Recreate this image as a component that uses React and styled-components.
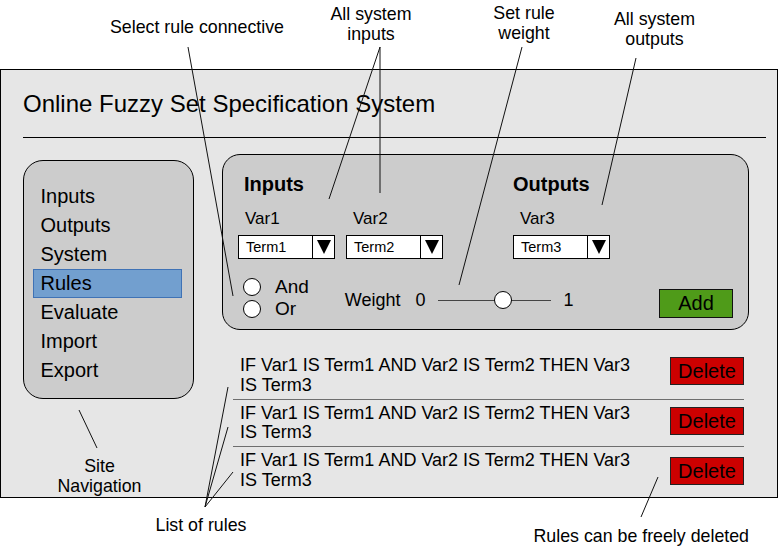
import React from "react";
import styled, { createGlobalStyle } from "styled-components";

const GlobalStyle = createGlobalStyle`
  html, body {
    margin: 0;
    background: #fff;
  }
  body {
    font-family: "Liberation Sans", Arial, sans-serif;
    color: #000;
  }
`;

const NAV_ITEMS = ["Inputs", "Outputs", "System", "Rules", "Evaluate", "Import", "Export"];
const RULES = [
  "IF Var1 IS Term1 AND Var2 IS Term2 THEN Var3 IS Term3",
  "IF Var1 IS Term1 AND Var2 IS Term2 THEN Var3 IS Term3",
  "IF Var1 IS Term1 AND Var2 IS Term2 THEN Var3 IS Term3",
];

// callout labels drawn over the mockup
const CALLOUTS = [
  { text: "Select rule connective", x: 110, y: 16.5 },
  { text: "All system\ninputs", x: 371, y: 4, center: true },
  { text: "Set rule\nweight", x: 524, y: 2.5, center: true },
  { text: "All system\noutputs", x: 654.5, y: 9, center: true },
  { text: "Site\nNavigation", x: 99.5, y: 456, center: true },
  { text: "List of rules", x: 155.5, y: 515 },
  { text: "Rules can be freely deleted", x: 533.5, y: 526 },
];

const LEADERS = [
  [188, 47, 233, 296],
  [380, 47, 380, 193],
  [380, 47, 329, 199],
  [522, 47, 459, 285],
  [636, 58, 602, 205],
  [79, 410, 97, 448],
  [205, 507, 228, 387],
  [205, 507, 228, 427],
  [205, 507, 233, 472],
  [641, 517, 658, 477],
];

function Select({ value }) {
  return (
    <SelectBox>
      <SelectValue>{value}</SelectValue>
      <SelectArrow>
        <Triangle />
      </SelectArrow>
    </SelectBox>
  );
}

function App() {
  return (
    <Page>
      <GlobalStyle />
      <Window>
        <Header>
          <Title>Online Fuzzy Set Specification System</Title>
        </Header>
        <Body>
          <Nav>
            {NAV_ITEMS.map((item) => (
              <NavItem key={item} $active={item === "Rules"}>
                {item}
              </NavItem>
            ))}
          </Nav>
          <Main>
            <Panel>
              <PanelTop>
                <Group>
                  <GroupTitle $indent={6}>Inputs</GroupTitle>
                  <Fields>
                    <Field>
                      <FieldLabel>Var1</FieldLabel>
                      <Select value="Term1" />
                    </Field>
                    <Field>
                      <FieldLabel>Var2</FieldLabel>
                      <Select value="Term2" />
                    </Field>
                  </Fields>
                </Group>
                <Group $offset={70}>
                  <GroupTitle>Outputs</GroupTitle>
                  <Fields>
                    <Field>
                      <FieldLabel>Var3</FieldLabel>
                      <Select value="Term3" />
                    </Field>
                  </Fields>
                </Group>
              </PanelTop>
              <PanelBottom>
                <Radios>
                  <RadioOption>
                    <RadioCircle />
                    And
                  </RadioOption>
                  <RadioOption>
                    <RadioCircle />
                    Or
                  </RadioOption>
                </Radios>
                <Weight>
                  <span>Weight</span>
                  <span>0</span>
                  <Track>
                    <Thumb $value={0.575} />
                  </Track>
                  <span>1</span>
                </Weight>
                <AddButton>Add</AddButton>
              </PanelBottom>
            </Panel>
            <RuleList>
              {RULES.map((rule, i) => (
                <RuleRow key={i}>
                  <RuleText>{rule}</RuleText>
                  <DeleteButton $shift={i * 2.5}>Delete</DeleteButton>
                </RuleRow>
              ))}
            </RuleList>
          </Main>
        </Body>
      </Window>
      <Leaders width="778" height="549" viewBox="0 0 778 549">
        {LEADERS.map(([x1, y1, x2, y2], i) => (
          <line key={i} x1={x1} y1={y1} x2={x2} y2={y2} stroke="#111" strokeWidth="1" />
        ))}
      </Leaders>
      {CALLOUTS.map((c) => (
        <Callout key={c.text} $x={c.x} $y={c.y} $center={c.center}>
          {c.text}
        </Callout>
      ))}
    </Page>
  );
}

const Page = styled.div`
  position: relative;
  width: 778px;
  height: 549px;
  padding-top: 69px;
  box-sizing: border-box;
  overflow: hidden;
`;

const Window = styled.div`
  width: 778px;
  height: 429px;
  box-sizing: border-box;
  border: 1px solid #000;
  background: #e6e6e6;
  padding: 0 11px 0 22px;
`;

const Header = styled.div`
  padding: 20px 0 19px;
  border-bottom: 1px solid #000;
`;

const Title = styled.h1`
  margin: 0;
  font-size: 24px;
  line-height: 28px;
  font-weight: normal;
`;

const Body = styled.div`
  display: flex;
  align-items: flex-start;
  gap: 28px;
`;

const Nav = styled.nav`
  margin-top: 22px;
  width: 171px;
  height: 239px;
  box-sizing: border-box;
  border: 1px solid #000;
  border-radius: 20px;
  background: #cccccc;
  padding: 20.5px 11px 0 9px;
`;

const NavItem = styled.div`
  height: 29px;
  box-sizing: border-box;
  border: 1px solid ${(p) => (p.$active ? "#3f72b5" : "transparent")};
  background: ${(p) => (p.$active ? "#729fcf" : "transparent")};
  padding-left: 6.5px;
  font-size: 20px;
  line-height: 27px;
`;

const Main = styled.div`
  margin-top: 16px;
  width: 527px;
`;

const Panel = styled.div`
  border: 1px solid #000;
  border-radius: 18px;
  background: #cccccc;
  padding: 18px 15px 9px;
`;

const PanelTop = styled.div`
  display: flex;
`;

const Group = styled.div`
  margin-left: ${(p) => p.$offset || 0}px;
`;

const GroupTitle = styled.div`
  font-size: 20px;
  font-weight: bold;
  line-height: 23px;
  padding-left: ${(p) => p.$indent || 0}px;
  margin-bottom: 13px;
`;

const Fields = styled.div`
  display: flex;
  gap: 11px;
`;

const Field = styled.div`
  display: flex;
  flex-direction: column;
  gap: 6px;
`;

const FieldLabel = styled.div`
  font-size: 17px;
  line-height: 20px;
  padding-left: 7px;
`;

const SelectBox = styled.div`
  display: flex;
  width: 97px;
  height: 24px;
  box-sizing: border-box;
  border: 1px solid #000;
  background: #fff;
`;

const SelectValue = styled.span`
  flex: 1;
  padding-left: 7px;
  font-size: 14.5px;
  line-height: 22px;
`;

const SelectArrow = styled.span`
  width: 21px;
  border-left: 1px solid #000;
  display: flex;
  align-items: center;
  justify-content: center;
`;

const Triangle = styled.span`
  width: 0;
  height: 0;
  border-left: 7.5px solid transparent;
  border-right: 7.5px solid transparent;
  border-top: 14px solid #000;
`;

const PanelBottom = styled.div`
  display: flex;
  align-items: flex-start;
  margin-top: 16.5px;
`;

const Radios = styled.div`
  margin-left: 5px;
  display: flex;
  flex-direction: column;
`;

const RadioOption = styled.label`
  display: flex;
  align-items: center;
  gap: 14px;
  height: 22px;
  font-size: 19px;
`;

const RadioCircle = styled.span`
  width: 18px;
  height: 18px;
  box-sizing: border-box;
  border: 1px solid #000;
  border-radius: 50%;
  background: #fff;
`;

const Weight = styled.div`
  display: flex;
  align-items: center;
  height: 22px;
  margin: 13.5px 0 0 36px;
  font-size: 18px;

  span:nth-child(2) {
    margin-left: 15px;
  }
`;

const Track = styled.div`
  position: relative;
  width: 113px;
  height: 18px;
  margin: 0 13px 0 12px;

  &::before {
    content: "";
    position: absolute;
    left: 0;
    right: 0;
    top: 9px;
    height: 1px;
    background: #444;
  }
`;

const Thumb = styled.span`
  position: absolute;
  top: 0;
  left: calc(${(p) => p.$value * 100}% - 9px);
  width: 18px;
  height: 18px;
  box-sizing: border-box;
  border: 1px solid #000;
  border-radius: 50%;
  background: #fff;
`;

const AddButton = styled.div`
  margin: 13px 0 0 auto;
  width: 74px;
  height: 29px;
  box-sizing: border-box;
  border: 1px solid #111;
  background: #4f9b19;
  font-size: 20px;
  line-height: 27px;
  text-align: center;
`;

const RuleList = styled.div`
  margin: 22.5px 5px 0 11px;
`;

const RuleRow = styled.div`
  display: flex;
  align-items: flex-start;
  padding: 4px 0 3.5px;

  & + & {
    border-top: 1px solid #6e6e6e;
  }
`;

const RuleText = styled.div`
  width: 410px;
  padding-left: 7px;
  font-size: 18px;
  line-height: 19.5px;
`;

const DeleteButton = styled.div`
  margin: ${(p) => 0.5 + p.$shift}px 0 0 auto;
  width: 74px;
  height: 28.5px;
  box-sizing: border-box;
  border: 1px solid #222;
  background: #cc0000;
  font-size: 20px;
  line-height: 26.5px;
  text-align: center;
`;

const Leaders = styled.svg`
  position: absolute;
  left: 0;
  top: 0;
  pointer-events: none;
`;

const Callout = styled.div`
  position: absolute;
  top: ${(p) => p.$y}px;
  left: ${(p) => p.$x}px;
  transform: ${(p) => (p.$center ? "translateX(-50%)" : "none")};
  font-size: 17.8px;
  line-height: 20px;
  text-align: center;
  white-space: pre;
`;

export default App;
